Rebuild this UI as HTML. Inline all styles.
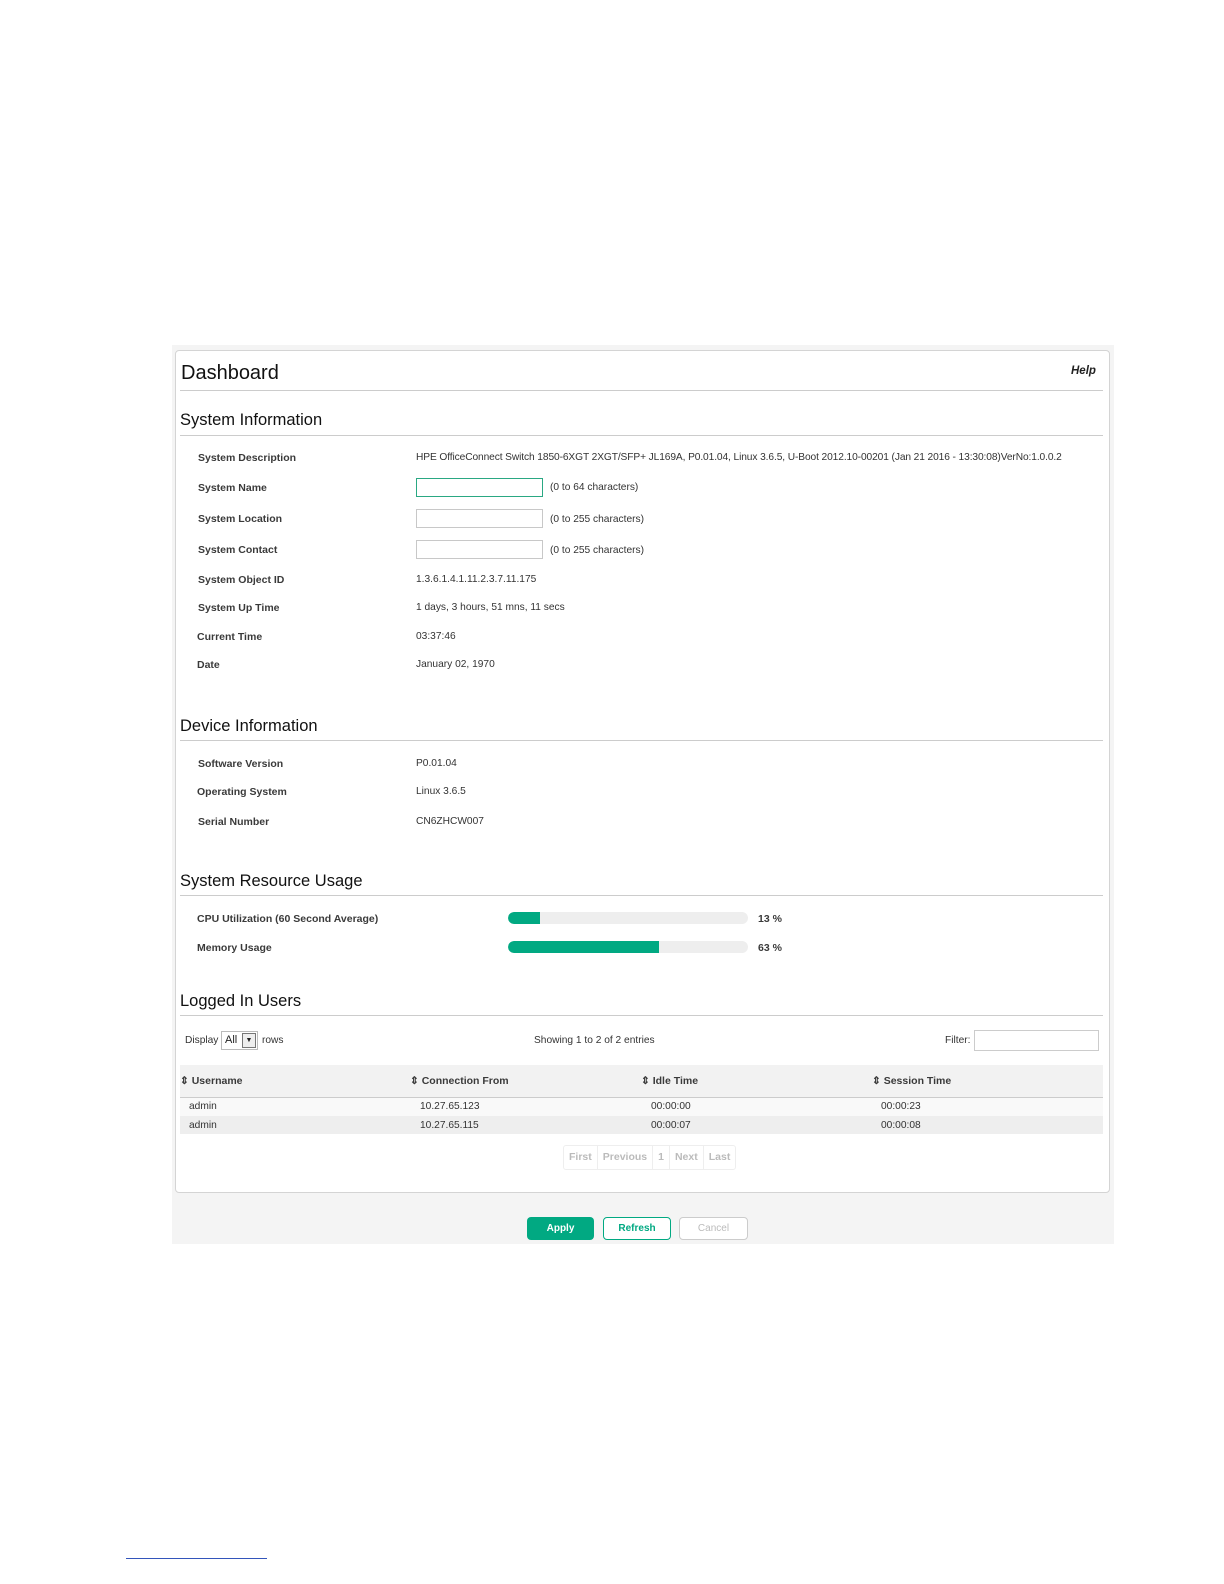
<!DOCTYPE html>
<html><head><meta charset="utf-8"><style>
*{margin:0;padding:0;box-sizing:border-box}
body{width:1224px;height:1584px;background:#fff;position:relative;font-family:"Liberation Sans",Arial,sans-serif;color:#222;overflow:hidden}
.a{position:absolute;white-space:nowrap}
.l{font-size:10.5px;font-weight:bold;color:#3a3a3a;line-height:14px}
.v{font-size:10.2px;color:#333;line-height:14px}
.h{font-size:16.5px;color:#111;line-height:20px}
.hr{position:absolute;left:180px;width:923px;height:1px;background:#ccc}
.inp{position:absolute;width:127px;height:19px;border:1px solid #c8c8c8;background:#fff}
.bar{position:absolute;left:508px;width:240px;height:12px;border-radius:6px;background:#eee;overflow:hidden}
.bar div{height:100%;background:#01a982;border-radius:6px 0 0 6px}
.btn{position:absolute;top:1217px;height:23px;border-radius:4px;font-size:10px;font-weight:bold;text-align:center;line-height:23px}
</style></head><body>
<div class="a" style="left:172px;top:345px;width:942px;height:899px;background:#f4f4f4"></div>
<div class="a" style="left:175px;top:350px;width:935px;height:843px;background:#fff;border:1px solid #d4d4d4;border-radius:4px"></div>

<div class="a" style="left:181px;top:361px;font-size:20px;line-height:24px;color:#111">Dashboard</div>
<div class="a" style="left:1071px;top:365px;font-size:11.5px;font-weight:bold;font-style:italic;color:#222">Help</div>
<div class="hr" style="top:390px"></div>

<div class="a h" style="left:180px;top:410px">System Information</div>
<div class="hr" style="top:435px"></div>
<div class="a l" style="left:198px;top:451px">System Description</div>
<div class="a v" style="left:416px;top:451px;letter-spacing:-0.1px">HPE OfficeConnect Switch 1850-6XGT 2XGT/SFP+ JL169A, P0.01.04, Linux 3.6.5, U-Boot 2012.10-00201 (Jan 21 2016 - 13:30:08)VerNo:1.0.0.2</div>
<div class="a l" style="left:198px;top:481px">System Name</div>
<div class="inp" style="left:416px;top:478px;border-color:#2aa883"></div>
<div class="a v" style="left:550px;top:481px">(0 to 64 characters)</div>
<div class="a l" style="left:198px;top:512px">System Location</div>
<div class="inp" style="left:416px;top:509px"></div>
<div class="a v" style="left:550px;top:513px">(0 to 255 characters)</div>
<div class="a l" style="left:198px;top:543px">System Contact</div>
<div class="inp" style="left:416px;top:540px"></div>
<div class="a v" style="left:550px;top:544px">(0 to 255 characters)</div>
<div class="a l" style="left:198px;top:573px">System Object ID</div>
<div class="a v" style="left:416px;top:573px">1.3.6.1.4.1.11.2.3.7.11.175</div>
<div class="a l" style="left:198px;top:601px">System Up Time</div>
<div class="a v" style="left:416px;top:601px">1 days, 3 hours, 51 mns, 11 secs</div>
<div class="a l" style="left:197px;top:630px">Current Time</div>
<div class="a v" style="left:416px;top:630px">03:37:46</div>
<div class="a l" style="left:197px;top:658px">Date</div>
<div class="a v" style="left:416px;top:658px">January 02, 1970</div>

<div class="a h" style="left:180px;top:716px">Device Information</div>
<div class="hr" style="top:740px"></div>
<div class="a l" style="left:198px;top:757px">Software Version</div>
<div class="a v" style="left:416px;top:757px">P0.01.04</div>
<div class="a l" style="left:197px;top:785px">Operating System</div>
<div class="a v" style="left:416px;top:785px">Linux 3.6.5</div>
<div class="a l" style="left:198px;top:815px">Serial Number</div>
<div class="a v" style="left:416px;top:815px">CN6ZHCW007</div>

<div class="a h" style="left:180px;top:871px">System Resource Usage</div>
<div class="hr" style="top:895px"></div>
<div class="a l" style="left:197px;top:912px">CPU Utilization (60 Second Average)</div>
<div class="bar" style="top:912px"><div style="width:32px"></div></div>
<div class="a l" style="left:758px;top:912px">13 %</div>
<div class="a l" style="left:197px;top:941px">Memory Usage</div>
<div class="bar" style="top:941px"><div style="width:151px"></div></div>
<div class="a l" style="left:758px;top:941px">63 %</div>

<div class="a h" style="left:180px;top:991px">Logged In Users</div>
<div class="hr" style="top:1015px"></div>
<div class="a v" style="left:185px;top:1034px">Display</div>
<div class="a" style="left:221px;top:1031px;width:37px;height:19px;border:1px solid #bbb;background:#fff;font-size:11px;line-height:17px;padding-left:3px">All<span style="position:absolute;right:1px;top:1px;width:14px;height:15px;border:1px solid #777;background:#eee;font-size:7px;line-height:13px;text-align:center">▼</span></div>
<div class="a v" style="left:262px;top:1034px">rows</div>
<div class="a v" style="left:534px;top:1034px">Showing 1 to 2 of 2 entries</div>
<div class="a v" style="left:945px;top:1034px">Filter:</div>
<div class="a" style="left:974px;top:1030px;width:125px;height:21px;border:1px solid #ccc;background:#fff"></div>

<div class="a" style="left:180px;top:1065px;width:923px;height:33px;background:#f2f2f2;border-bottom:1px solid #ccc"></div>
<div class="a l" style="left:180px;top:1074px">⇕ Username</div>
<div class="a l" style="left:410px;top:1074px">⇕ Connection From</div>
<div class="a l" style="left:641px;top:1074px">⇕ Idle Time</div>
<div class="a l" style="left:872px;top:1074px">⇕ Session Time</div>
<div class="a" style="left:180px;top:1098px;width:923px;height:18px;background:#f9f9f9"></div>
<div class="a" style="left:180px;top:1116px;width:923px;height:18px;background:#eeeeee"></div>
<div class="a v" style="left:189px;top:1100px">admin</div>
<div class="a v" style="left:420px;top:1100px">10.27.65.123</div>
<div class="a v" style="left:651px;top:1100px">00:00:00</div>
<div class="a v" style="left:881px;top:1100px">00:00:23</div>
<div class="a v" style="left:189px;top:1119px">admin</div>
<div class="a v" style="left:420px;top:1119px">10.27.65.115</div>
<div class="a v" style="left:651px;top:1119px">00:00:07</div>
<div class="a v" style="left:881px;top:1119px">00:00:08</div>

<div class="a" style="left:563px;top:1145px;height:25px;border:1px solid #eee;border-radius:3px;display:flex;font-size:10.5px;font-weight:bold;color:#bbb;line-height:23px">
<span style="padding:0 5px;border-right:1px solid #eee">First</span><span style="padding:0 5px;border-right:1px solid #eee">Previous</span><span style="padding:0 5px;border-right:1px solid #eee">1</span><span style="padding:0 5px;border-right:1px solid #eee">Next</span><span style="padding:0 5px">Last</span></div>

<div class="btn" style="left:527px;width:67px;background:#01a982;color:#fff">Apply</div>
<div class="btn" style="left:603px;width:68px;border:1px solid #01a982;color:#01a982;background:#fff;line-height:21px">Refresh</div>
<div class="btn" style="left:679px;width:69px;border:1px solid #ccc;color:#bbb;background:#fff;font-weight:normal;line-height:21px">Cancel</div>

<div class="a" style="left:126px;top:1558px;width:141px;height:1px;background:#3355bb"></div>
</body></html>
